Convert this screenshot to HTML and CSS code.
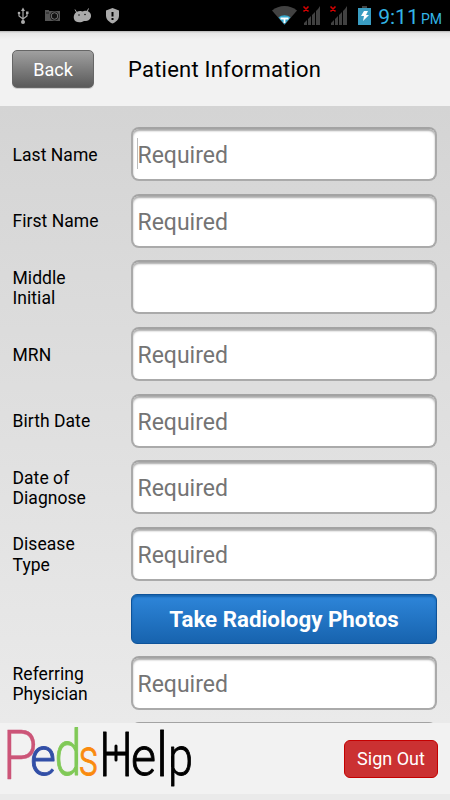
FILE: index.html
```html
<!DOCTYPE html>
<html lang="en">
<head>
<meta charset="utf-8">
<title>Patient Information</title>
<link rel="stylesheet" href="styles.css">
</head>
<body>
<div class="status">
  <svg class="status-left" width="125" height="30" viewBox="0 0 125 30" fill="none">
    <g stroke="#aaa" stroke-width="1.2"><path d="M23 22V10M19 13v3l4 3 4-3v-3"/><path d="M23 7.5l2 3.5h-4z" fill="#aaa" stroke="none"/><circle cx="23" cy="22" r="2" fill="#aaa" stroke="none"/><circle cx="19" cy="13" r="1.3" fill="#aaa" stroke="none"/><path d="M26 11.5h2.5V14H26z" fill="#aaa" stroke="none"/></g>
    <path d="M45 10h4v1h11v10H45z" fill="#555"/><circle cx="54.500" cy="16" r="4.500" fill="#111"/><circle cx="54.500" cy="16" r="3.300" stroke="#777"/><path d="M46 13h3" stroke="#222"/>
    <path d="M74 19c-1-4 1.500-8 6-8 2 0 2 1 4 0 4-1 7.500 2 7 5.500s-4 5-7 4.500c-3 2-9 2-10-2z" fill="#aaa"/><path d="M77 13l-2-3.500M87 12l1.500-3.500" stroke="#aaa"/><circle cx="79" cy="15" r=".8" fill="#111"/><circle cx="85" cy="14.500" r=".8" fill="#111"/>
    <path d="M112.500 8l6.500 2.500v5c0 4-3 6.500-6.500 8-3.500-1.500-6.500-4-6.500-8v-5z" fill="#aaa"/><path d="M112.500 12v4.500M112.500 18v2" stroke="#000" stroke-width="2"/>
  </svg>
  <div class="status-right">
    <svg width="106" height="30" viewBox="270 0 106 30">
      <path d="M272 10.500C279 4.500 290 4.500 297 10.500L284.500 25z" fill="#424242"/>
      <path d="M278.500 17.500c3.500-3 8.500-3 12 0l-6 7z" fill="#35a9cf"/><path d="M280.500 18.500h8M284.500 18v5" stroke="#fff" stroke-width="1.800"/>
      <g fill="#414141"><path d="M304 25v-2l3-3v5zM308 25v-6l3-3v9zM312 25V15l3-3v13zM316 25V11l2-2 2-3v19z"/><path d="M331 25v-2l3-3v5zM335 25v-6l3-3v9zM339 25V15l3-3v13zM343 25V11l2-2 2-3v19z"/></g>
      <path d="M303.500 6.500l5 5m0-5l-5 5M330.500 6.500l5 5m0-5l-5 5" stroke="#d40000" stroke-width="1.600"/>
      <path d="M362 6h5v3h-5z" fill="#444"/><path d="M358 8h13v17h-13z" fill="#3a9dc2"/><path d="M364 11h4l-2 4h3l-6 6 1-5h-3z" fill="#fff"/>
    </svg>
    <div class="clock">9:11 <span class="pm">PM</span></div>
  </div>
</div>
<header class="header">
  <button class="back">Back</button>
  <h1 class="title">Patient Information</h1>
</header>
<main class="form">
  <div class="row"><label>Last Name</label><div class="field focus">Required</div></div>
  <div class="row"><label>First Name</label><div class="field">Required</div></div>
  <div class="row"><label>Middle<br>Initial</label><div class="field"></div></div>
  <div class="row"><label>MRN</label><div class="field">Required</div></div>
  <div class="row"><label>Birth Date</label><div class="field">Required</div></div>
  <div class="row"><label>Date of<br>Diagnose</label><div class="field">Required</div></div>
  <div class="row"><label>Disease<br>Type</label><div class="field">Required</div></div>
  <div class="row row-photo"><button class="photo">Take Radiology Photos</button></div>
  <div class="row row-last"><label>Referring<br>Physician</label><div class="field">Required</div></div>
  <div class="row"><label></label><div class="field"></div></div>
</main>
<footer class="footer">
  <svg class="logo" width="200" height="71" viewBox="0 723 200 71" role="img" aria-label="PedsHelp">
    <g class="letters">
      <text class="pink" x="2.500" y="779" font-size="68" textLength="35" lengthAdjust="spacingAndGlyphs">P</text>
      <text class="blue" x="30" y="775" font-size="53" textLength="26" lengthAdjust="spacingAndGlyphs">e</text>
      <text class="green" x="54.500" y="775" font-size="63" textLength="27" lengthAdjust="spacingAndGlyphs">d</text>
      <text class="orange" x="78.500" y="775" font-size="52" textLength="20" lengthAdjust="spacingAndGlyphs">s</text>
      <text x="99" y="776" font-size="61" textLength="34" lengthAdjust="spacingAndGlyphs">H</text>
      <text x="131" y="775" font-size="53" textLength="25" lengthAdjust="spacingAndGlyphs">e</text>
      <text x="156" y="776" font-size="61" textLength="12" lengthAdjust="spacingAndGlyphs">l</text>
      <text x="168" y="775" font-size="53" textLength="25" lengthAdjust="spacingAndGlyphs">p</text>
    </g>
    <path class="spark" d="M116 746v14"/>
  </svg>
  <button class="signout">Sign Out</button>
</footer>
</body>
</html>
```

FILE: styles.css
```css
* { box-sizing: border-box; }
body {
  margin: 0;
  width: 450px;
  height: 800px;
  overflow: hidden;
  display: flex;
  flex-direction: column;
  font-family: Roboto, "Liberation Sans", sans-serif;
  color: #000;
  background: #eaeaea;
}
button { font-family: inherit; padding: 0; }
.status {
  flex: none;
  height: 31px;
  display: flex;
  justify-content: space-between;
  background: #000;
}
.status-right { display: flex; padding-right: 8px; }
.clock { width: 66px; text-align: right; font-size: 21px; line-height: 34px; color: #33b5e5; white-space: nowrap; }
.pm { font-size: 14px; margin-left: -3px; }
.header {
  flex: none;
  height: 75px;
  display: flex;
  align-items: center;
  padding: 1px 12px 0;
  background: linear-gradient(#b5b5b5, #e6e6e6 2px, #f2f2f2 9px);
}
.back {
  width: 82px;
  height: 38px;
  border: 1px solid #666;
  border-radius: 5px;
  background: linear-gradient(#a0a0a0, #5a5a5a);
  color: #fff;
  font-size: 18px;
  box-shadow: 0 1px 0 #ccc;
}
.title { margin: 0 0 0 34px; font-size: 22px; font-weight: 400; letter-spacing: .22px; }
.form {
  flex: none;
  height: 617px;
  overflow: hidden;
  padding: 21px 13px 0 12.5px;
  background: linear-gradient(#d4d4d4, #eaeaea);
}
.row {
  display: grid;
  grid-template-columns: 118.5px 306px;
  align-items: center;
  height: 54px;
  margin-bottom: 12.67px;
}
.row label { padding-top: 2px; font-size: 17.5px; line-height: 20.5px; letter-spacing: .05px; }
.field {
  height: 54px;
  padding: 0 4.500px;
  border: 2px solid #aaa;
  border-top-color: #a3a3a3;
  border-radius: 8px;
  background: #fff;
  box-shadow: inset 0 2px 2px #aaa;
  color: #747474;
  font-size: 23px;
  line-height: 53px;
}
.focus { background: linear-gradient(#bbb, #bbb) 4px 9px / 1px 31px no-repeat #fff; }
.row-photo { height: 50px; }
.row-last { margin-bottom: 11.67px; }
.photo {
  grid-column: 2;
  height: 50px;
  border: 1px solid #0d539a;
  border-radius: 6px;
  background: linear-gradient(#2e86da, #1763ae);
  box-shadow: inset 0 2px 2px #1765af;
  color: #fff;
  font-size: 22.300px;
  font-weight: 700;
}
.footer {
  flex: none;
  height: 71px;
  display: flex;
  justify-content: space-between;
  align-items: center;
  padding-right: 12px;
  background: #f2f2f2;
}
.logo { display: block; overflow: visible; }
.letters { fill: #000; stroke: #000; stroke-width: .9; stroke-linejoin: round; font-weight: 300; }
.letters .pink { fill: #cc5578; stroke: #cc5578; stroke-width: .3; }
.letters .blue { fill: #324fa7; stroke: #324fa7; }
.letters .green { fill: #80c957; stroke: #80c957; }
.letters .orange { fill: #fa8a0e; stroke: #fa8a0e; }
.spark { fill: none; stroke: #000; stroke-width: 3; stroke-linecap: round; }
.signout {
  width: 94px;
  height: 38px;
  border: 1px solid #c50000;
  border-radius: 6px;
  background: #cb3132;
  color: #fff;
  font-size: 18px;
}
```
